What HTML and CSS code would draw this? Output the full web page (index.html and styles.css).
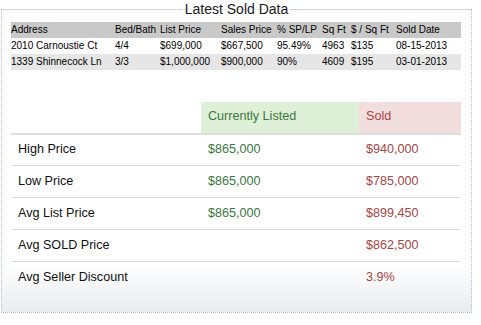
FILE: index.html
```html
<!DOCTYPE html>
<html>
<head>
<meta charset="utf-8">
<link rel="stylesheet" href="styles.css">
</head>
<body>
<fieldset class="panel">
  <legend class="panel-title">Latest Sold Data</legend>
  <table class="sold-table">
    <thead>
      <tr>
        <th class="c-addr">Address</th>
        <th class="c-bed">Bed/Bath</th>
        <th class="c-list">List Price</th>
        <th class="c-sales">Sales Price</th>
        <th class="c-pct">% SP/LP</th>
        <th class="c-sqft">Sq Ft</th>
        <th class="c-psf">$ / Sq Ft</th>
        <th class="c-date">Sold Date</th>
      </tr>
    </thead>
    <tbody>
      <tr>
        <td>2010 Carnoustie Ct</td>
        <td>4/4</td>
        <td>$699,000</td>
        <td>$667,500</td>
        <td>95.49%</td>
        <td>4963</td>
        <td>$135</td>
        <td>08-15-2013</td>
      </tr>
      <tr class="alt">
        <td>1339 Shinnecock Ln</td>
        <td>3/3</td>
        <td>$1,000,000</td>
        <td>$900,000</td>
        <td>90%</td>
        <td>4609</td>
        <td>$195</td>
        <td>03-01-2013</td>
      </tr>
    </tbody>
  </table>

  <table class="stats-table">
    <thead>
      <tr>
        <th class="s-label"></th>
        <th class="s-listed">Currently Listed</th>
        <th class="s-sold">Sold</th>
      </tr>
    </thead>
    <tbody>
      <tr>
        <td class="label">High Price</td>
        <td class="listed">$865,000</td>
        <td class="sold">$940,000</td>
      </tr>
      <tr>
        <td class="label">Low Price</td>
        <td class="listed">$865,000</td>
        <td class="sold">$785,000</td>
      </tr>
      <tr>
        <td class="label">Avg List Price</td>
        <td class="listed">$865,000</td>
        <td class="sold">$899,450</td>
      </tr>
      <tr>
        <td class="label">Avg SOLD Price</td>
        <td class="listed"></td>
        <td class="sold">$862,500</td>
      </tr>
      <tr>
        <td class="label">Avg Seller Discount</td>
        <td class="listed"></td>
        <td class="sold">3.9%</td>
      </tr>
    </tbody>
  </table>
</fieldset>
</body>
</html>
```

FILE: styles.css
```css
html, body {
  margin: 0;
  padding: 0;
  background: #fff;
  font-family: "Liberation Sans", Arial, sans-serif;
}

.panel {
  box-sizing: border-box;
  width: 471px;
  margin: 1px 0 0 1px;
  padding: 5px 9px 19px;
  border: 1px dotted #b5badd;
  background: linear-gradient(to bottom, #ffffff 0%, #ffffff 84%, #e9ebef 100%);
}

.panel-title {
  margin: 0 auto;
  padding: 0 2px;
  font-size: 14px;
  line-height: 16px;
  color: #1a1a1a;
}

.sold-table {
  width: 450px;
  border-collapse: collapse;
  table-layout: fixed;
  font-size: 10px;
  line-height: 16px;
  color: #000;
  margin-bottom: 32px;
}

.sold-table th,
.sold-table td {
  padding: 0;
  height: 16px;
  font-weight: normal;
  text-align: left;
  white-space: nowrap;
}

.sold-table thead tr { background: #c9c9c9; }
.sold-table tr.alt { background: #e6e6e6; }

.c-addr { width: 104px; }
.c-bed { width: 45px; }
.c-list { width: 61px; }
.c-sales { width: 56px; }
.c-pct { width: 45px; }
.c-sqft { width: 29px; }
.c-psf { width: 45px; }
.c-date { width: 65px; }

.stats-table {
  width: 450px;
  border-collapse: separate;
  border-spacing: 0;
  table-layout: fixed;
  font-size: 12.6px;
  line-height: 20px;
}

.stats-table th {
  padding: 4px 7px 7px;
  font-weight: normal;
  text-align: left;
  border-bottom: 2px solid #dddddd;
}

.s-label { width: 176px; }
.s-listed { width: 144px; background: #dff0d8; color: #3c763d; }
.s-sold { background: #f2dede; color: #a94442; }

.stats-table td {
  padding: 5px 7px 6px;
  border-top: 1px solid #dddddd;
}

.stats-table tbody tr:first-child td {
  border-top: 0;
  padding-top: 4px;
}

.stats-table .label { color: #111; }
.stats-table .listed { color: #3c763d; }
.stats-table .sold { color: #a94442; }
```
